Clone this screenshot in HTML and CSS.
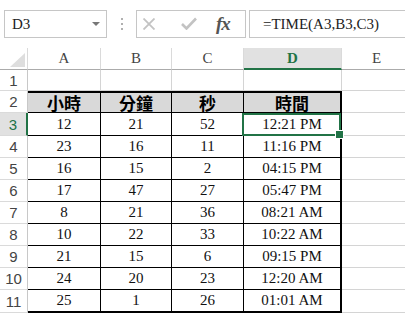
FILE: index.html
```html
<!DOCTYPE html>
<html lang="zh-Hant">

<head>
    <meta charset="UTF-8">
    <title>TIME</title>
    <link rel="stylesheet" href="styles.css">
</head>

<body>
    <!-- Formula bar -->
    <div class="formula-bar">
        <div class="name-box">
            <span>D3</span>
            <span class="caret"></span>
        </div>
        <div class="grip"><i></i><i></i><i></i></div>
        <div class="fn-box">
            <svg class="icon-x" width="12" height="12" viewBox="0 0 12 12">
                <path d="M0.5 0.5 L11.5 11.5 M11.5 0.5 L0.5 11.5" stroke="#c3c3c3" stroke-width="1.8" fill="none" />
            </svg>
            <svg class="icon-ok" width="16" height="13" viewBox="0 0 16 13">
                <path d="M1 7 L5.5 11.5 L15 1.5" stroke="#c3c3c3" stroke-width="2.6" fill="none" />
            </svg>
            <span class="fx">fx</span>
        </div>
        <div class="formula">=TIME(A3,B3,C3)</div>
    </div>

    <!-- Sheet -->
    <div class="sheet">
        <div class="hd corner"><span class="tri"></span></div>
        <div class="hd col">A</div>
        <div class="hd col">B</div>
        <div class="hd col">C</div>
        <div class="hd col active">D</div>
        <div class="hd col">E</div>

        <div class="hd row">1</div>
        <div class="c"></div><div class="c"></div><div class="c"></div><div class="c"></div><div class="c"></div>

        <div class="hd row">2</div>
        <div class="c t th">小時</div>
        <div class="c t th">分鐘</div>
        <div class="c t th">秒</div>
        <div class="c t th last">時間</div>
        <div class="c"></div>

        <div class="hd row active">3</div>
        <div class="c t">12</div><div class="c t">21</div><div class="c t">52</div>
        <div class="c t last sel">12:21 PM</div><div class="c"></div>

        <div class="hd row">4</div>
        <div class="c t">23</div><div class="c t">16</div><div class="c t">11</div>
        <div class="c t last">11:16 PM</div><div class="c"></div>

        <div class="hd row">5</div>
        <div class="c t">16</div><div class="c t">15</div><div class="c t">2</div>
        <div class="c t last">04:15 PM</div><div class="c"></div>

        <div class="hd row">6</div>
        <div class="c t">17</div><div class="c t">47</div><div class="c t">27</div>
        <div class="c t last">05:47 PM</div><div class="c"></div>

        <div class="hd row">7</div>
        <div class="c t">8</div><div class="c t">21</div><div class="c t">36</div>
        <div class="c t last">08:21 AM</div><div class="c"></div>

        <div class="hd row">8</div>
        <div class="c t">10</div><div class="c t">22</div><div class="c t">33</div>
        <div class="c t last">10:22 AM</div><div class="c"></div>

        <div class="hd row">9</div>
        <div class="c t">21</div><div class="c t">15</div><div class="c t">6</div>
        <div class="c t last">09:15 PM</div><div class="c"></div>

        <div class="hd row">10</div>
        <div class="c t">24</div><div class="c t">20</div><div class="c t">23</div>
        <div class="c t last">12:20 AM</div><div class="c"></div>

        <div class="hd row">11</div>
        <div class="c t end">25</div><div class="c t end">1</div><div class="c t end">26</div>
        <div class="c t last end">01:01 AM</div><div class="c"></div>
    </div>
</body>

</html>
```

FILE: styles.css
```css
/* General */
* {
    box-sizing: border-box;
}

body {
    margin: 0;
    background: #fff;
    color: #000;
    font-family: 'Liberation Serif', serif;
    overflow: hidden;
}

/* Formula bar */
.formula-bar {
    display: flex;
    align-items: flex-start;
    height: 48px;
    padding: 10px 0 0 4px;
}

.name-box {
    display: flex;
    align-items: center;
    justify-content: space-between;
    width: 103px;
    height: 28px;
    padding: 0 6px 0 7px;
    border: 1px solid #c6c6c6;
    font-size: 15px;
    color: #222;
}

.caret {
    width: 0;
    height: 0;
    border-left: 4px solid transparent;
    border-right: 4px solid transparent;
    border-top: 4px solid #777;
}

.grip {
    display: flex;
    flex-direction: column;
    gap: 3px;
    margin: 8px 13px 0 14px;
}

.grip i {
    display: block;
    width: 2px;
    height: 2px;
    background: #b0b0b0;
}

.fn-box {
    display: flex;
    align-items: center;
    width: 110px;
    height: 28px;
    padding-left: 6px;
    border: 1px solid #c6c6c6;
}

.icon-ok {
    margin-left: 26px;
    margin-top: -2px;
}

.fx {
    margin-left: 19px;
    font-style: italic;
    font-weight: bold;
    font-size: 19px;
    color: #555;
    letter-spacing: -1px;
}

.formula {
    flex: 1;
    height: 28px;
    margin-left: 3px;
    margin-right: -4px;
    padding-left: 13px;
    border: 1px solid #c6c6c6;
    font-size: 15px;
    line-height: 26px;
    color: #222;
}

/* Sheet grid */
.sheet {
    display: grid;
    grid-template-columns: 28px 73px 71px 72px 98px 70px;
    grid-template-rows: 22px 21px 22px 23px repeat(7, 22px) 23px;
}

.hd {
    display: flex;
    align-items: center;
    justify-content: center;
    color: #444;
    background: #fff;
}

.col {
    border-right: 1px solid #dadada;
    border-bottom: 1px solid #ababab;
    font-size: 15px;
}

.col.active {
    background: #e1e1e1;
    color: #217346;
    font-weight: bold;
    border-bottom: 2px solid #217346;
}

.corner {
    justify-content: flex-end;
    align-items: flex-end;
    padding: 0 2px 2px 0;
    border-right: 1px solid #dadada;
    border-bottom: 1px solid #ababab;
}

.tri {
    width: 15px;
    height: 14px;
    background: #dedede;
    clip-path: polygon(100% 0, 100% 100%, 0 100%);
}

.row {
    border-right: 1px solid #c8c8c8;
    border-bottom: 1px solid #dadada;
    font-family: 'Liberation Sans', sans-serif;
    font-size: 15px;
}

.row.active {
    background: #e1e1e1;
    color: #217346;
    border-right: 2px solid #217346;
}

/* Cells */
.c {
    display: flex;
    align-items: center;
    justify-content: center;
    border-right: 1px solid #d4d4d4;
    border-bottom: 1px solid #d4d4d4;
    font-size: 15px;
    color: #111;
}

.t {
    border-right-color: #000;
    border-bottom-color: #000;
}

.th {
    border-top: 2px solid #000;
    background: #d9d9d9;
    font-family: 'Noto Sans CJK TC', sans-serif;
    font-weight: bold;
    font-size: 17px;
    color: #000;
}

.last {
    border-right-width: 2px;
}

.end {
    border-bottom-width: 2px;
}

/* Active cell */
.sel {
    position: relative;
}

.sel::before {
    content: "";
    position: absolute;
    inset: 0 -1px -1px -2px;
    border: 2px solid #217346;
}

.sel::after {
    content: "";
    position: absolute;
    right: -4px;
    bottom: -4px;
    width: 7px;
    height: 7px;
    background: #217346;
    border: 1px solid #fff;
}
```
